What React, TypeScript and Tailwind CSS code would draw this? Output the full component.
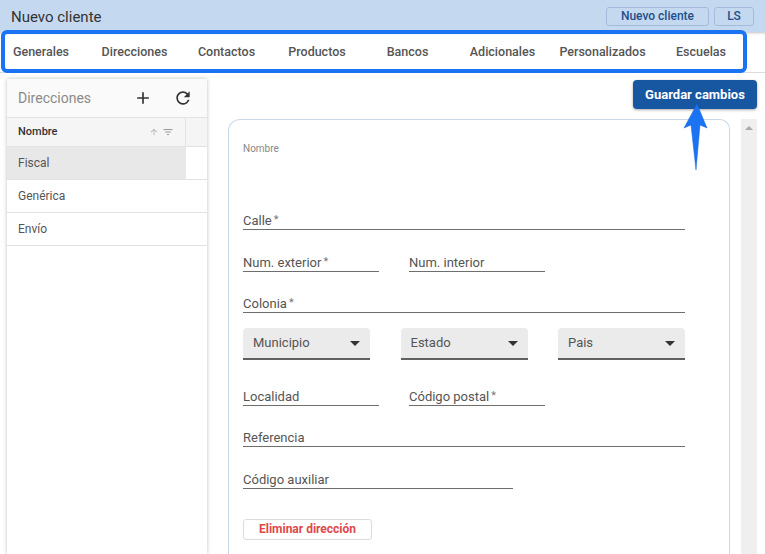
import { MdAdd, MdRefresh, MdFilterList, MdArrowUpward } from "react-icons/md";

const tabs = [
  { name: "Generales", w: "w-[88px] pr-[6px]" },
  { name: "Direcciones", w: "w-[93px]" },
  { name: "Contactos", w: "w-[91px]" },
  { name: "Productos", w: "w-[90px]" },
  { name: "Bancos", w: "w-[91px]" },
  { name: "Adicionales", w: "w-[99px]" },
  { name: "Personalizados", w: "w-[101px]" },
  { name: "Escuelas", w: "w-[96px]" },
];

const rows = ["Fiscal", "Genérica", "Envío"];

const Field = ({ label, required, className = "" }: { label: string; required?: boolean; className?: string }) => (
  <div className={`h-[21px] flex items-end border-b border-[#6e6e6e] text-[13px] leading-[16px] text-[#555] pb-0 ${className}`}>
    {label}
    {required && <span className="text-[#777] text-[11px] ml-[2px] self-start mt-[3px]">*</span>}
  </div>
);

const Select = ({ label }: { label: string }) => (
  <div className="w-[127px] h-[32px] bg-[#ebebeb] rounded-t-[4px] border-b-2 border-[#616161] flex items-center justify-between pl-[10px] pr-[10px] text-[13px] text-[#555]">
    <span>{label}</span>
    <span className="w-0 h-0 border-l-[5px] border-r-[5px] border-t-[5px] border-l-transparent border-r-transparent border-t-[#333]" />
  </div>
);

export default function App() {
  return (
    <div
      className="relative w-[765px] h-[554px] overflow-hidden bg-white flex flex-col"
      style={{ fontFamily: "Roboto, 'Noto Sans', sans-serif" }}
    >
      {/* header */}
      <div className="h-[32px] bg-[#c4d9f0] flex items-center justify-between pl-[11px] pr-[11px] pt-[2px] shrink-0">
        <span className="text-[15px] text-[#333]">Nuevo cliente</span>
        <div className="flex gap-[5px] -mt-[2px]">
          <button className="h-[19px] px-[14px] border border-[#a3bcd9] rounded-[3px] text-[12px] font-medium text-[#1f4f8a] leading-none">
            Nuevo cliente
          </button>
          <button className="h-[19px] w-[40px] border border-[#a3bcd9] rounded-[3px] text-[12px] font-medium text-[#1f4f8a] leading-none">
            LS
          </button>
        </div>
      </div>

      {/* tabs */}
      <div className="h-[41px] shrink-0 bg-white flex items-stretch border-b border-[#dcdcdc] shadow-[inset_0_3px_3px_-2px_rgba(0,0,0,0.25)]">
        {tabs.map((t) => (
          <div
            key={t.name}
            className={`${t.w} pt-[3px] flex items-center justify-center text-[12.5px] font-medium text-[#555] border-b-2 ${
              t.name === "Direcciones" ? "border-[#c9d3e0]" : "border-transparent"
            }`}
          >
            {t.name}
          </div>
        ))}
      </div>

      {/* body */}
      <div className="flex flex-1 min-h-0">
        {/* left list */}
        <div className="ml-[7px] mt-[6px] w-[200px] bg-white shadow-[0_0_4px_rgba(0,0,0,0.25)] flex flex-col">
          <div className="h-[39px] bg-[#fafafa] border-b border-[#e2e2e2] flex items-center pl-[11px] pr-[14px]">
            <span className="text-[14px] text-[#8a8a8a] flex-1">Direcciones</span>
            <MdAdd className="text-[#333] mr-[20px]" size={20} />
            <MdRefresh className="text-[#333]" size={20} />
          </div>
          <div className="h-[29px] flex border-b border-[#e2e2e2] bg-[#f5f5f5]">
            <div className="w-[179px] flex items-center pl-[11px] pr-[11px] border-r border-[#e2e2e2]">
              <span className="text-[11px] font-medium text-[#333] flex-1">Nombre</span>
              <MdArrowUpward className="text-[#b0b0b0] mr-[3px]" size={10} />
              <MdFilterList className="text-[#999]" size={12} />
            </div>
            <div className="flex-1" />
          </div>
          {rows.map((r, i) => (
            <div key={r} className="h-[33px] flex border-b border-[#e2e2e2]">
              <div
                className={`w-[179px] flex items-center pl-[11px] text-[12px] text-[#555] ${
                  i === 0 ? "bg-[#e8e8e8]" : ""
                }`}
              >
                {r}
              </div>
            </div>
          ))}
        </div>

        {/* right side */}
        <div className="flex-1 flex flex-col pl-[21px] pr-[8px] pt-[7px] min-w-0">
          <div className="flex justify-end">
            <button className="h-[29px] w-[124px] bg-[#1756a0] rounded-[4px] text-white text-[13px] font-bold shadow-[0_1px_3px_rgba(0,0,0,0.35)]">
              Guardar cambios
            </button>
          </div>
          <div className="flex flex-1 mt-[10px] min-h-0">
            <div className="flex-1 border border-b-0 border-[#c9d8e8] rounded-tl-[12px] rounded-tr-[10px] pl-[14px] pr-[44px] flex flex-col">
              <div className="mt-[23px] text-[10px] leading-[12px] text-[#888]">Nombre</div>
              <Field label="Calle" required className="mt-[54px]" />
              <div className="flex gap-[30px] mt-[21px]">
                <Field label="Num. exterior" required className="w-[136px]" />
                <Field label="Num. interior" className="w-[136px]" />
              </div>
              <Field label="Colonia" required className="mt-[20px]" />
              <div className="flex justify-between mt-[15px]">
                <Select label="Municipio" />
                <Select label="Estado" />
                <Select label="Pais" />
              </div>
              <div className="flex gap-[30px] mt-[25px]">
                <Field label="Localidad" className="w-[136px]" />
                <Field label="Código postal" required className="w-[136px]" />
              </div>
              <Field label="Referencia" className="mt-[20px]" />
              <Field label="Código auxiliar" className="mt-[21px] w-[270px]" />
              <div className="mt-[27px]">
                <button className="h-[21px] w-[129px] border border-[#dcdcdc] rounded-[3px] text-[12px] font-bold text-[#e04848]">
                  Eliminar dirección
                </button>
              </div>
            </div>
            <div className="ml-[11px] w-[16px] bg-[#efefef] flex justify-center pt-[7px]">
              <span className="w-0 h-0 border-l-[4px] border-r-[4px] border-b-[4px] border-l-transparent border-r-transparent border-b-[#aaa]" />
            </div>
          </div>
        </div>
      </div>

      {/* annotation overlays */}
      <div className="absolute left-[1px] top-[30px] w-[746px] h-[43px] border-4 border-[#1a73f3] rounded-[6px] pointer-events-none" />
      <svg className="absolute left-[675px] top-[100px] pointer-events-none" width="40" height="75" viewBox="0 0 40 75">
        <polygon points="22,4 32,28 25,25 21,70 16,25 9,28" fill="#1a73f3" stroke="#1565d8" strokeWidth="0.5" />
      </svg>
    </div>
  );
}
